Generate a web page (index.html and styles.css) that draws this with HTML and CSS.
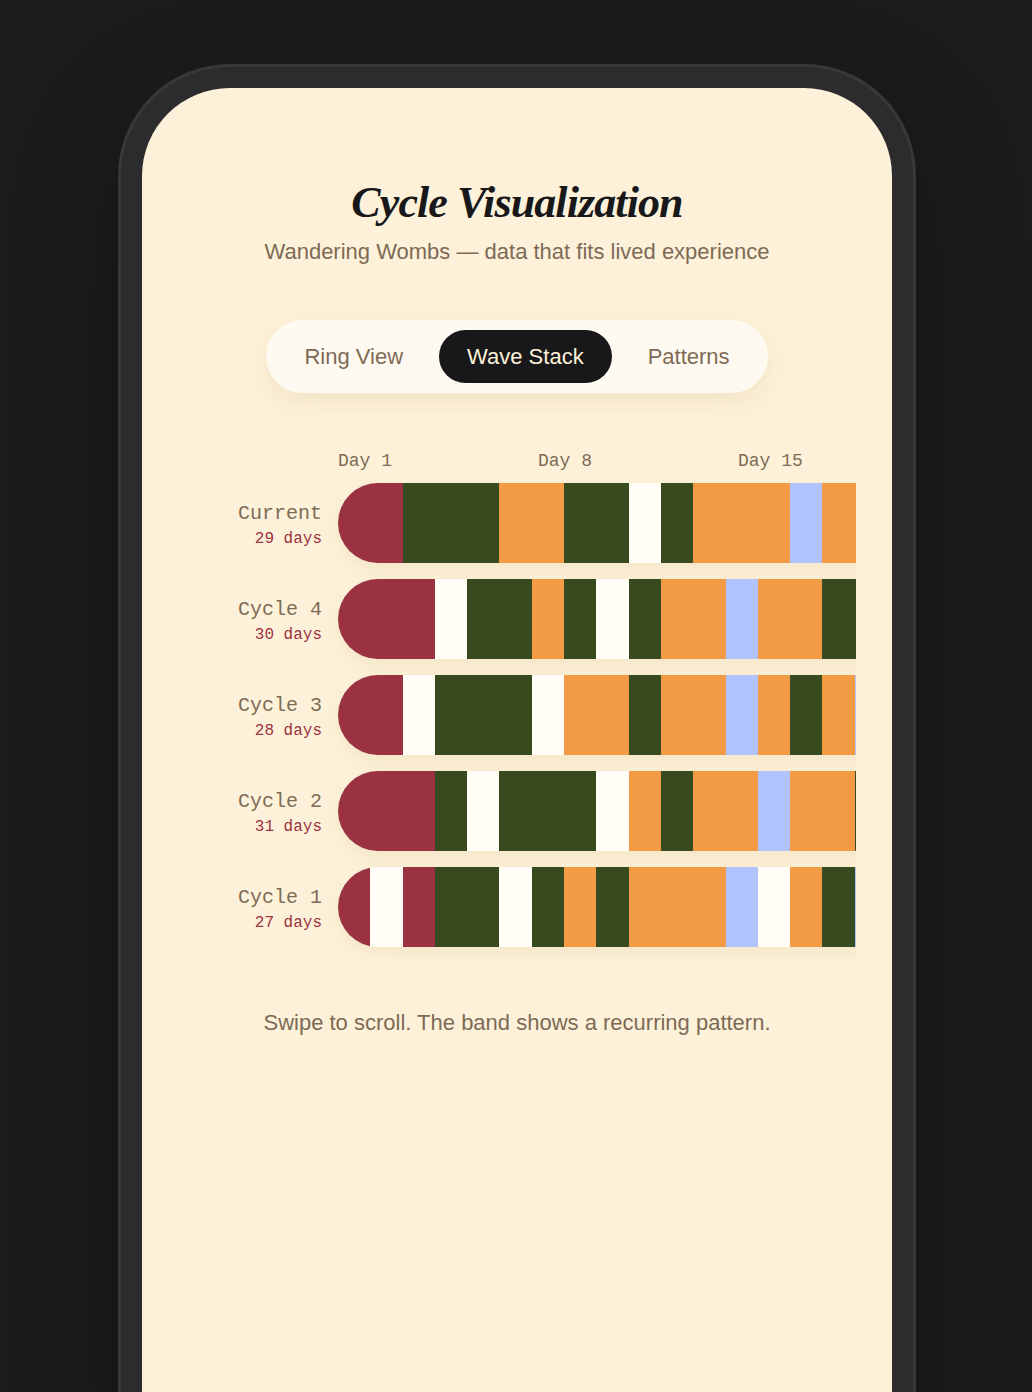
FILE: index.html
```html
<!DOCTYPE html>
<html lang="en">
<head>
<meta charset="utf-8">
<title>Cycle Visualization</title>
<link rel="stylesheet" href="styles.css">
</head>
<body>
<div class="device">
  <div class="screen">
    <h1 class="title">Cycle Visualization</h1>
    <p class="subtitle">Wandering Wombs — data that fits lived experience</p>

    <div class="tabs">
      <button class="tab">Ring View</button>
      <button class="tab active">Wave Stack</button>
      <button class="tab">Patterns</button>
    </div>

    <div class="chart">
      <div class="axis">
        <span class="tick">Day 1</span>
        <span class="tick">Day 8</span>
        <span class="tick">Day 15</span>
      </div>

      <div class="row">
        <div class="label"><div class="name">Current</div><div class="len">29 days</div></div>
        <div class="band">
          <span class="seg r w2"></span><span class="seg g w3"></span><span class="seg o w2"></span><span class="seg g w2"></span><span class="seg w w1"></span><span class="seg g w1"></span><span class="seg o w3"></span><span class="seg b w1"></span><span class="seg o w2"></span><span class="seg g w2"></span><span class="seg w w1"></span><span class="seg o w3"></span><span class="seg b w1"></span><span class="seg o w2"></span><span class="seg g w2"></span><span class="seg o w1"></span>
        </div>
      </div>

      <div class="row">
        <div class="label"><div class="name">Cycle 4</div><div class="len">30 days</div></div>
        <div class="band">
          <span class="seg r w3"></span><span class="seg w w1"></span><span class="seg g w2"></span><span class="seg o w1"></span><span class="seg g w1"></span><span class="seg w w1"></span><span class="seg g w1"></span><span class="seg o w2"></span><span class="seg b w1"></span><span class="seg o w2"></span><span class="seg g w2"></span><span class="seg o w3"></span><span class="seg b w1"></span><span class="seg g w2"></span><span class="seg w w1"></span><span class="seg o w3"></span><span class="seg g w2"></span><span class="seg o w1"></span>
        </div>
      </div>

      <div class="row">
        <div class="label"><div class="name">Cycle 3</div><div class="len">28 days</div></div>
        <div class="band">
          <span class="seg r w2"></span><span class="seg w w1"></span><span class="seg g w3"></span><span class="seg w w1"></span><span class="seg o w2"></span><span class="seg g w1"></span><span class="seg o w2"></span><span class="seg b w1"></span><span class="seg o w1"></span><span class="seg g w1"></span><span class="seg o w1"></span><span class="seg b w1"></span><span class="seg o w2"></span><span class="seg g w2"></span><span class="seg w w1"></span><span class="seg o w3"></span><span class="seg b w1"></span><span class="seg g w2"></span>
        </div>
      </div>

      <div class="row">
        <div class="label"><div class="name">Cycle 2</div><div class="len">31 days</div></div>
        <div class="band">
          <span class="seg r w3"></span><span class="seg g w1"></span><span class="seg w w1"></span><span class="seg g w3"></span><span class="seg w w1"></span><span class="seg o w1"></span><span class="seg g w1"></span><span class="seg o w2"></span><span class="seg b w1"></span><span class="seg o w2"></span><span class="seg g w1"></span><span class="seg o w3"></span><span class="seg w w1"></span><span class="seg g w2"></span><span class="seg o w3"></span><span class="seg b w1"></span><span class="seg g w2"></span><span class="seg o w2"></span>
        </div>
      </div>

      <div class="row">
        <div class="label"><div class="name">Cycle 1</div><div class="len">27 days</div></div>
        <div class="band">
          <span class="seg r w1"></span><span class="seg w w1"></span><span class="seg r w1"></span><span class="seg g w2"></span><span class="seg w w1"></span><span class="seg g w1"></span><span class="seg o w1"></span><span class="seg g w1"></span><span class="seg o w3"></span><span class="seg b w1"></span><span class="seg w w1"></span><span class="seg o w1"></span><span class="seg g w1"></span><span class="seg b w1"></span><span class="seg o w2"></span><span class="seg g w2"></span><span class="seg w w1"></span><span class="seg o w3"></span><span class="seg g w2"></span>
        </div>
      </div>
    </div>

    <p class="hint">Swipe to scroll. The band shows a recurring pattern.</p>
  </div>
</div>
</body>
</html>
```

FILE: styles.css
```css
html, body {
  margin: 0;
  padding: 0;
  height: 1392px;
  overflow: hidden;
  background: #1c1c1e;
}

.device {
  box-sizing: border-box;
  width: 798px;
  height: 1400px;
  margin: 64px 0 0 118px;
  background: #2c2c2e;
  border: 3px solid #38383a;
  border-radius: 112px 112px 0 0;
  padding: 21px 21px 0;
  box-shadow: 0 40px 110px rgba(0, 0, 0, 0.32);
}

.screen {
  box-sizing: border-box;
  height: 100%;
  background: #fdf2d9;
  border-radius: 88px 88px 0 0;
  padding: 89px 36px 0;
  display: flex;
  flex-direction: column;
  align-items: center;
}

.title {
  margin: 0;
  font-family: "Liberation Serif", "Times New Roman", serif;
  font-style: italic;
  font-weight: 700;
  font-size: 44px;
  line-height: 52px;
  letter-spacing: -0.9px;
  color: #18181a;
  text-align: center;
}

.subtitle {
  margin: 9px 0 0;
  font-family: "Liberation Sans", Arial, sans-serif;
  font-size: 22px;
  line-height: 28px;
  color: #7e6a56;
  text-align: center;
}

.tabs {
  margin-top: 54px;
  display: flex;
  gap: 8px;
  padding: 10px;
  background: rgba(255, 255, 255, 0.62);
  border-radius: 40px;
  box-shadow: 0 10px 28px rgba(150, 110, 40, 0.10);
}

.tab {
  font-family: "Liberation Sans", Arial, sans-serif;
  font-size: 22px;
  line-height: 25px;
  padding: 14px 28px;
  border: 0;
  border-radius: 27px;
  background: transparent;
  color: #7e6a56;
}

.tab.active {
  background: #18181a;
  color: #fdf2d9;
}

.chart {
  --day: 32.3px;
  align-self: stretch;
  margin-top: 57px;
  padding-bottom: 20px;
  overflow: hidden;
  display: flex;
  flex-direction: column;
  gap: 16px;
}

.axis {
  display: flex;
  padding-left: 160px;
  margin-bottom: -5px;
  font-family: "Liberation Mono", "DejaVu Sans Mono", monospace;
  font-size: 18px;
  line-height: 22px;
  color: #7e6a56;
}

.tick {
  flex: 0 0 200px;
}

.row {
  display: flex;
  align-items: center;
}

.label {
  flex: 0 0 144px;
  margin-right: 16px;
  padding-top: 2px;
  text-align: right;
  font-family: "Liberation Mono", "DejaVu Sans Mono", monospace;
}

.name {
  font-size: 20px;
  line-height: 27px;
  color: #7e6a56;
}

.len {
  margin-top: 2px;
  font-size: 16px;
  line-height: 20px;
  color: #9a3241;
}

.band {
  flex: 0 0 auto;
  display: flex;
  height: 80px;
  border-radius: 40px;
  overflow: hidden;
  box-shadow: 0 6px 18px rgba(150, 110, 40, 0.09);
}

.seg { display: block; height: 100%; }
.w1 { width: var(--day); }
.w2 { width: calc(var(--day) * 2); }
.w3 { width: calc(var(--day) * 3); }

.r { background: #9a3241; }
.g { background: #374b1f; }
.o { background: #f29b44; }
.b { background: #b1c3fc; }
.w { background: #fffdf6; }

.hint {
  margin: 42px 0 0;
  font-family: "Liberation Sans", Arial, sans-serif;
  font-size: 22px;
  line-height: 28px;
  color: #7e6a56;
  text-align: center;
}
```
